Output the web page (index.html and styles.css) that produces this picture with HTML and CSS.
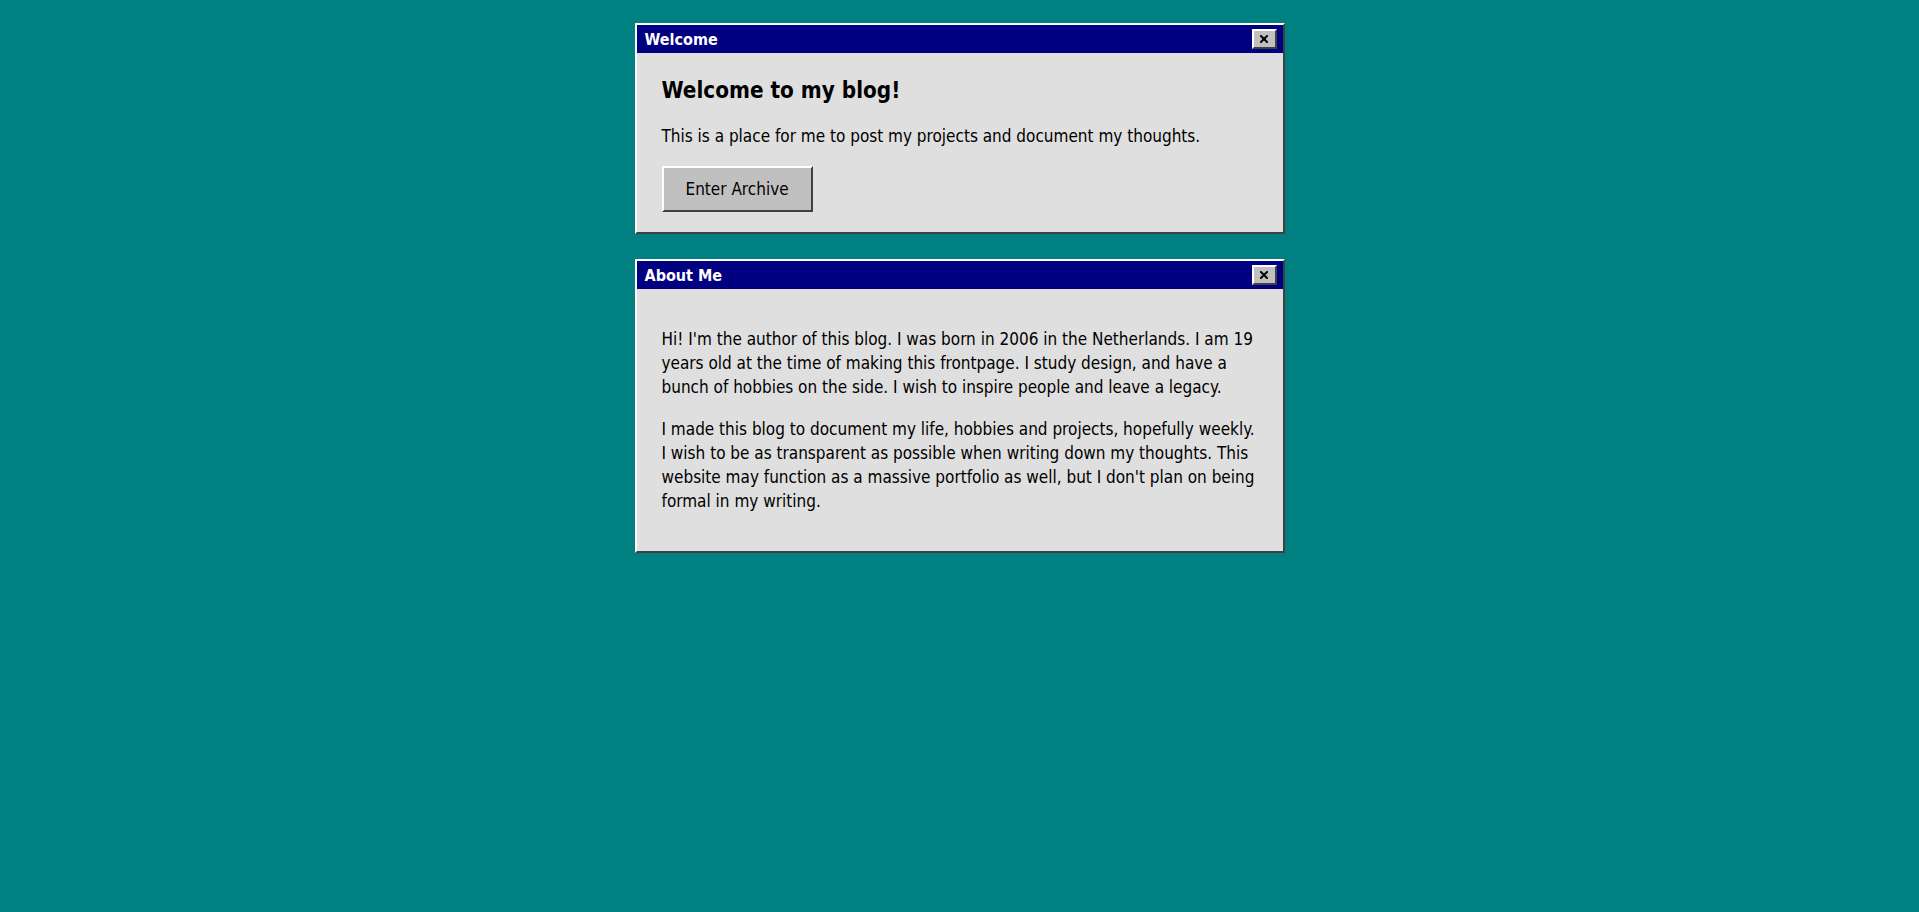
FILE: index.html
```html
<!DOCTYPE html>
<html lang="en">
<head>
<meta charset="utf-8">
<title>My Blog</title>
<link rel="stylesheet" href="styles.css">
</head>
<body>
<main class="desktop">
  <section class="window">
    <header class="titlebar">
      <span class="title">Welcome</span>
      <button class="close" type="button" aria-label="Close">
        <svg class="close-icon" viewBox="0 0 8 8" width="8" height="8" aria-hidden="true"><path d="M1 1 L7 7 M7 1 L1 7" stroke="#000" stroke-width="2" stroke-linecap="square"/></svg>
      </button>
    </header>
    <div class="window-body">
      <h2 class="heading">Welcome to my blog!</h2>
      <p>This is a place for me to post my projects and document my thoughts.</p>
      <button class="btn" type="button">Enter Archive</button>
    </div>
  </section>
  <section class="window">
    <header class="titlebar">
      <span class="title">About Me</span>
      <button class="close" type="button" aria-label="Close">
        <svg class="close-icon" viewBox="0 0 8 8" width="8" height="8" aria-hidden="true"><path d="M1 1 L7 7 M7 1 L1 7" stroke="#000" stroke-width="2" stroke-linecap="square"/></svg>
      </button>
    </header>
    <div class="window-body">
      <p>Hi! I'm the author of this blog. I was born in 2006 in the Netherlands. I am 19 years old at the time of making this frontpage. I study design, and have a bunch of hobbies on the side. I wish to inspire people and leave a legacy.</p>
      <p>I made this blog to document my life, hobbies and projects, hopefully weekly. I wish to be as transparent as possible when writing down my thoughts. This website may function as a massive portfolio as well, but I don't plan on being formal in my writing.</p>
    </div>
  </section>
</main>
</body>
</html>
```

FILE: styles.css
```css
html, body {
  margin: 0;
  padding: 0;
}

body {
  background: #008080;
  font-family: Tahoma, "DejaVu Sans Condensed", "DejaVu Sans", sans-serif;
  font-stretch: condensed;
  color: #000;
}

.desktop {
  display: flex;
  flex-direction: column;
  align-items: center;
  gap: 25px;
  padding-top: 23px;
}

.window {
  width: 650px;
  box-sizing: border-box;
  background: #dfdfdf;
  border: 2px solid;
  border-color: #ffffff #404040 #404040 #ffffff;
}

.titlebar {
  height: 28px;
  background: #000080;
  color: #ffffff;
  display: flex;
  align-items: center;
  justify-content: space-between;
  padding: 0 6px 0 8px;
}

.title {
  font-weight: bold;
  font-size: 16px;
}

.close {
  width: 25px;
  height: 20px;
  padding: 0;
  margin: 0;
  box-sizing: border-box;
  background: #c0c0c0;
  border: 2px solid;
  border-color: #ffffff #404040 #404040 #ffffff;
  display: flex;
  align-items: center;
  justify-content: center;
}

.close-icon {
  display: block;
  width: 8px;
  height: 8px;
}

.window-body {
  padding: 20px 25px;
  font-size: 17px;
}

.heading {
  margin: 4px 0 21px;
  font-size: 22.3px;
  font-weight: bold;
}

.window-body p {
  margin: 18px 0;
  line-height: 24px;
}

.btn {
  background: #c0c0c0;
  border: 2px solid;
  border-color: #ffffff #404040 #404040 #ffffff;
  padding: 11px 22px;
  font-family: inherit;
  font-size: 17px;
  color: #000;
  margin: 0;
}
```
